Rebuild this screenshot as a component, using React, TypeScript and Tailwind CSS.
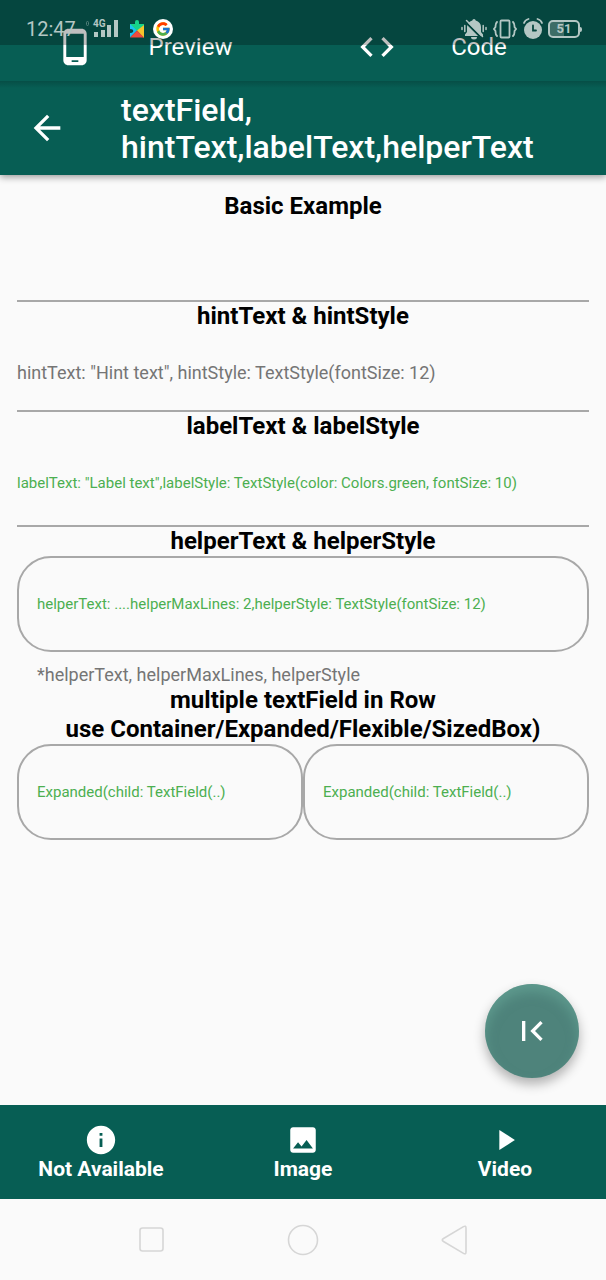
import type { ReactNode } from "react";
import {
  MdArrowBack,
  MdCode,
  MdFirstPage,
  MdImage,
  MdInfo,
  MdPhoneAndroid,
  MdPlayArrow,
} from "react-icons/md";
import { FcGoogle } from "react-icons/fc";

function SignalIcon() {
  return (
    <svg width="26" height="20" viewBox="0 0 26 20" fill="currentColor" aria-hidden="true">
      <rect x="1" y="13" width="4" height="5" />
      <rect x="8" y="11" width="4" height="7" />
      <rect x="14" y="6" width="4" height="12" />
      <rect x="21" y="1" width="4" height="17" />
    </svg>
  );
}

function PuzzleIcon() {
  return (
    <svg width="14" height="18" viewBox="0 0 14 18" aria-hidden="true">
      <path d="M0 4h5V2a2 2 0 0 1 4 0v2h5v4L7 11 0 7z" fill="#17d38a" />
      <path d="M0 4l7 6.500-7 7V13a2 2 0 0 0 0-4z" fill="#19c3f3" />
      <path d="M14 5v13L7 10.500z" fill="#f6c52c" />
      <path d="M0 17.500l7-7 7 7z" fill="#ee4b3e" />
      <circle cx="1.500" cy="11" r="1.800" fill="#06463f" />
    </svg>
  );
}

function MutedBellIcon() {
  return (
    <svg width="26" height="22" viewBox="0 0 26 22" fill="none" stroke="currentColor" strokeWidth="1.500" strokeLinecap="round" aria-hidden="true">
      <path d="M13 1a1.700 1.700 0 0 1 1.700 1.500C18 3.300 20 6 20 9v5l2 2.500v1.500H4v-1.500L6 14V9c0-3 2-5.700 5.300-6.500A1.700 1.700 0 0 1 13 1z" fill="currentColor" stroke="none" />
      <path d="M10 19h6a3 2.500 0 0 1-6 0z" fill="currentColor" stroke="none" />
      <path d="M5 4.500l16 16" stroke="#06463f" strokeWidth="1.800" />
      <path d="M5.500 2.500l16 16" />
      <path d="M1 9.500v2M3.800 7.500v6M22.200 7.500v6M25 9.500v2" />
    </svg>
  );
}

function VibrateIcon() {
  return (
    <svg width="24" height="20" viewBox="0 0 24 20" fill="none" stroke="currentColor" strokeWidth="1.800" strokeLinecap="round" aria-hidden="true">
      <rect x="7.500" y="1.500" width="9" height="17" rx="1" />
      <path d="M4 3Q2.500 4.500 2.500 7v1L1 10l1.500 2v1q0 2.500 1.500 4M20 3q1.500 1.500 1.500 4v1L23 10l-1.500 2v1q0 2.500-1.500 4" />
    </svg>
  );
}

function AlarmIcon() {
  return (
    <svg width="20" height="22" viewBox="0 0 20 22" fill="none" stroke="currentColor" strokeWidth="1.800" strokeLinecap="round" aria-hidden="true">
      <circle cx="10" cy="12" r="9" fill="currentColor" stroke="none" />
      <path d="M1 5Q2 2 5.500 1M19 5Q18 2 14.500 1" />
      <path d="M10 7.500V12.500H13" stroke="#06463f" />
    </svg>
  );
}

function StatusBar() {
  return (
    <div className="absolute inset-x-0 top-0 flex h-[45px] items-center justify-between bg-black/25 pt-[13px] pr-6 pl-[26px] text-[#b4c7c4]">
      <div className="flex items-center">
        <span className="w-[52px] text-[20px] leading-6 whitespace-nowrap">12:47</span>
        <span className="mt-1 ml-2 h-[5px] w-[3px] self-start rounded-full border border-[#52807a]" />
        <span className="relative ml-1 flex">
          <SignalIcon />
          <span className="absolute top-0 left-0 text-[10px] leading-[10px] font-bold">4G</span>
        </span>
        <span className="ml-[11px]"><PuzzleIcon /></span>
        <span className="ml-[9px] flex size-5 items-center justify-center rounded-full bg-white">
          <FcGoogle size={16} />
        </span>
      </div>
      <div className="flex items-center">
        <MutedBellIcon />
        <span className="ml-[6px]"><VibrateIcon /></span>
        <span className="ml-[6px]"><AlarmIcon /></span>
        <span className="ml-[5px] flex h-[18px] w-8 items-center justify-center rounded-[5px] border-2 border-current bg-linear-to-r from-[#3d6d66] from-50% to-transparent to-50% text-[13px] leading-3 font-bold">
          51
        </span>
        <span className="h-[5px] w-[2px] rounded-r bg-current" />
      </div>
    </div>
  );
}

function Heading({ id, children }: { id: string; children: ReactNode }) {
  return (
    <h2 id={id} className="text-center text-[24px] leading-[29px] font-bold text-black">
      {children}
    </h2>
  );
}

function OutlinedField({ label, describedBy }: { label: string; describedBy?: string }) {
  return (
    <label className="flex h-24 min-w-0 flex-1 items-center rounded-[34px] border-2 border-[#a8a8a8] px-[18px] text-[15px] text-[#4caf50]">
      <span className="shrink-0">{label}</span>
      <input type="text" aria-describedby={describedBy} className="min-w-0 flex-1 bg-transparent outline-none" />
    </label>
  );
}

const actions = [
  { label: "Not Available", Icon: MdInfo },
  { label: "Image", Icon: MdImage },
  { label: "Video", Icon: MdPlayArrow },
];

export default function App() {
  return (
    <div className="flex min-h-screen flex-col bg-[#fafafa] font-[Roboto,sans-serif]">
      <header className="relative z-10 bg-[#075e54] text-white shadow-[0_2px_7px_rgba(0,0,0,0.4)]">
        <nav className="grid h-[81px] grid-cols-2 pt-[13px]">
          <button type="button" className="flex items-center justify-center gap-[54px] pr-4 text-[24px]">
            <MdPhoneAndroid size={40} />
            Preview
          </button>
          <button type="button" className="flex items-center justify-center gap-[54px] pr-[45px] text-[24px]">
            <MdCode size={40} />
            Code
          </button>
        </nav>
        <div className="flex h-[94px] items-center bg-linear-to-b from-[#064e46] to-[#075e54] to-[7px] pl-[27px]">
          <button type="button" aria-label="Back" className="shrink-0">
            <MdArrowBack size={40} />
          </button>
          <h1 className="ml-[54px] pt-[2px] text-[32px] leading-[37px] font-medium">
            textField,
            <br />
            hintText,labelText,helperText
          </h1>
        </div>
        <StatusBar />
      </header>

      <main className="relative flex flex-1 flex-col px-[17px] pt-[17px]">
        <Heading id="basic">Basic Example</Heading>
        <input type="text" aria-labelledby="basic" className="h-[81px] w-full border-b-2 border-[#a8a8a8] bg-transparent outline-none" />

        <Heading id="hint">hintText &amp; hintStyle</Heading>
        <input
          type="text"
          aria-labelledby="hint"
          placeholder={'hintText: "Hint text", hintStyle: TextStyle(fontSize: 12)'}
          className="h-[81px] w-full border-b-2 border-[#a8a8a8] bg-transparent pt-1 text-[18px] outline-none placeholder:text-[#757575]"
        />

        <Heading id="label">labelText &amp; labelStyle</Heading>
        <label className="flex h-[86px] items-center border-b-2 border-[#a8a8a8] text-[15px] text-[#4caf50]">
          <span className="shrink-0">labelText: "Label text",labelStyle: TextStyle(color: Colors.green, fontSize: 10)</span>
          <input type="text" className="min-w-0 flex-1 bg-transparent outline-none" />
        </label>

        <Heading id="helper">helperText &amp; helperStyle</Heading>
        <div className="flex">
          <OutlinedField label="helperText: ....helperMaxLines: 2,helperStyle: TextStyle(fontSize: 12)" describedBy="helper-note" />
        </div>
        <p id="helper-note" className="px-5 pt-3 text-[18px] leading-[22px] text-[#757575]">
          *helperText, helperMaxLines, helperStyle
        </p>

        <Heading id="row">
          multiple textField in Row
          <br />
          use Container/Expanded/Flexible/SizedBox)
        </Heading>
        <div className="flex">
          <OutlinedField label="Expanded(child: TextField(..)" />
          <OutlinedField label="Expanded(child: TextField(..)" />
        </div>

        <button
          type="button"
          aria-label="First page"
          className="absolute right-[27px] bottom-[27px] flex size-[94px] items-center justify-center rounded-full bg-[#4e837b] text-white shadow-[0_6px_12px_rgba(0,0,0,0.3),inset_0_8px_12px_rgba(110,175,160,0.5)]"
        >
          <MdFirstPage size={40} />
        </button>
      </main>

      <footer className="grid h-[94px] grid-cols-3 bg-[#075e54] text-white">
        {actions.map(({ label, Icon }) => (
          <button key={label} type="button" className="flex flex-col items-center justify-center text-[21px] leading-[25px] font-bold">
            <Icon size={34} />
            {label}
          </button>
        ))}
      </footer>

      <nav className="flex h-[81px] items-center justify-between px-[136px]">
        <button type="button" aria-label="Recent apps">
          <svg width="32" height="32" viewBox="0 0 32 32" fill="none" stroke="#d6d6d6" strokeWidth="1.600">
            <rect x="4" y="4" width="23" height="23" rx="2.500" />
          </svg>
        </button>
        <button type="button" aria-label="Home">
          <svg width="32" height="32" viewBox="0 0 32 32" fill="none" stroke="#d6d6d6" strokeWidth="1.600">
            <circle cx="16" cy="16" r="14.500" />
          </svg>
        </button>
        <button type="button" aria-label="Go back">
          <svg width="32" height="32" viewBox="0 0 32 32" fill="none" stroke="#d6d6d6" strokeWidth="1.600" strokeLinejoin="round">
            <path d="M25.500 2.600Q28 1.300 28 4v24q0 2.700-2.500 1.400L5.500 17.500Q3 16 5.500 14.500z" />
          </svg>
        </button>
      </nav>
    </div>
  );
}
